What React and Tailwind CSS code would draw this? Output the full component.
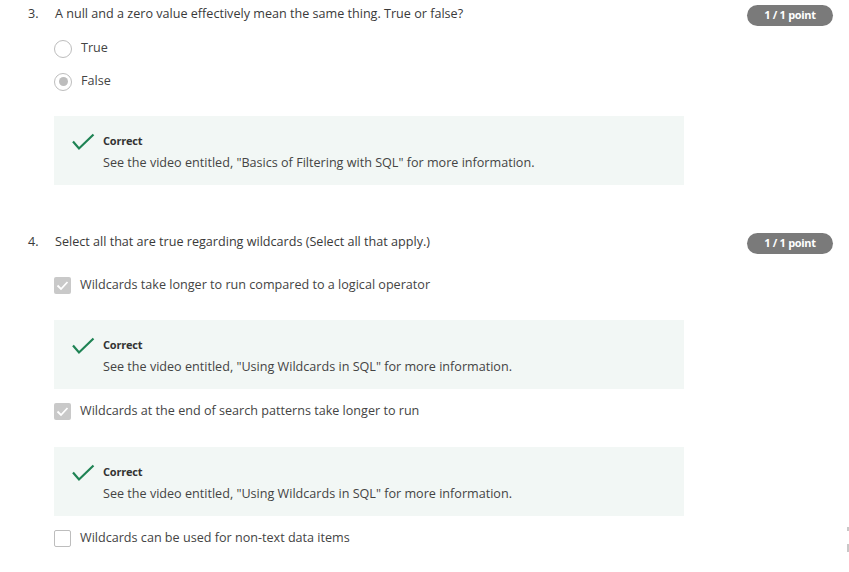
import React from "react";

const font = { fontFamily: '"Open Sans", "Noto Sans", sans-serif' };

function Badge() {
  return (
    <div className="h-[21px] w-[86px] rounded-full bg-[#7a7a7a] flex items-center justify-center text-white text-[11px] font-bold tracking-[-0.3px]">
      1 / 1 point
    </div>
  );
}

function Radio({ checked }) {
  return (
    <div className="w-[18px] h-[18px] rounded-full border-[1.5px] border-[#bdbdbd] bg-white flex items-center justify-center shrink-0">
      {checked && <div className="w-[9px] h-[9px] rounded-full bg-[#bdbdbd]" />}
    </div>
  );
}

function Checkbox({ checked }) {
  if (checked) {
    return (
      <div className="w-[17px] h-[17px] rounded-[2px] bg-[#c9c9c9] flex items-center justify-center shrink-0">
        <svg width="13" height="11" viewBox="0 0 13 11">
          <polyline points="1.5,5.5 5,9 11.5,2" fill="none" stroke="white" strokeWidth="1.8" />
        </svg>
      </div>
    );
  }
  return <div className="w-[17px] h-[17px] rounded-[2px] border-[1.5px] border-[#bdbdbd] bg-white shrink-0" />;
}

function Option({ control, label }) {
  return (
    <div className="h-[33px] flex items-center pl-[54px]">
      {control}
      <span className="ml-[9px] text-[12.6px] text-[#444]">{label}</span>
    </div>
  );
}

function Feedback({ text }) {
  return (
    <div className="ml-[54px] w-[630px] h-[69px] bg-[#f2f7f5] flex pt-[16px]">
      <div className="w-[49px] flex justify-end pr-[8px] pt-[1px]">
        <svg width="24" height="18" viewBox="0 0 24 18">
          <polyline points="2,8.5 8,15.5 22.5,1.5" fill="none" stroke="#1f8354" strokeWidth="2.2" />
        </svg>
      </div>
      <div className="flex flex-col">
        <div className="text-[11px] font-bold text-[#333] leading-[18px] tracking-[-0.2px]">Correct</div>
        <div className="text-[12.6px] text-[#444] leading-[18px] mt-[4px]">{text}</div>
      </div>
    </div>
  );
}

function Header({ num, text }) {
  return (
    <div className="flex items-center justify-between pr-[16px] h-[21px]">
      <div className="flex items-center text-[12.6px] text-[#3a3a3a] -mt-[3px]">
        <span className="w-[27px] pl-[28px] box-content">{num}</span>
        <span>{text}</span>
      </div>
      <Badge />
    </div>
  );
}

export default function App() {
  return (
    <div className="relative w-[849px] h-[572px] bg-white overflow-hidden" style={font}>
      <div className="pt-[5px]">
        <Header num="3." text="A null and a zero value effectively mean the same thing. True or false?" />
        <div className="mt-[6px]">
          <Option control={<Radio />} label="True" />
          <Option control={<Radio checked />} label="False" />
        </div>
        <div className="mt-[18px]">
          <Feedback text={'See the video entitled, "Basics of Filtering with SQL" for more information.'} />
        </div>

        <div className="mt-[48px]">
          <Header num="4." text="Select all that are true regarding wildcards (Select all that apply.)" />
        </div>
        <div className="mt-[15px]">
          <Option control={<Checkbox checked />} label="Wildcards take longer to run compared to a logical operator" />
        </div>
        <div className="mt-[18px]">
          <Feedback text={'See the video entitled, "Using Wildcards in SQL" for more information.'} />
        </div>
        <div className="mt-[6px]">
          <Option control={<Checkbox checked />} label="Wildcards at the end of search patterns take longer to run" />
        </div>
        <div className="mt-[19px]">
          <Feedback text={'See the video entitled, "Using Wildcards in SQL" for more information.'} />
        </div>
        <div className="mt-[6px]">
          <Option control={<Checkbox />} label="Wildcards can be used for non-text data items" />
        </div>
      </div>
      <div className="absolute left-[847px] top-[527px] w-[2px] h-[4px] bg-[#c8c8c8]" />
      <div className="absolute left-[847px] top-[544px] w-[2px] h-[8px] bg-[#c8c8c8]" />
    </div>
  );
}
